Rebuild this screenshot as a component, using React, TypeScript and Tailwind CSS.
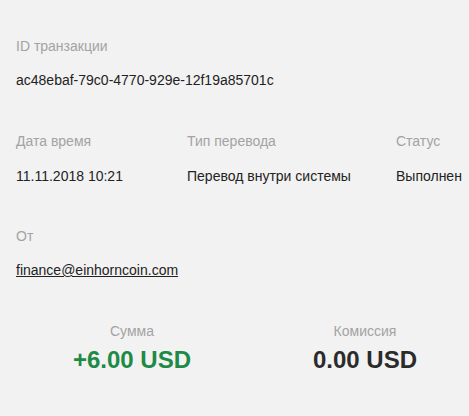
export default function App() {
  return (
    <div className="min-h-screen overflow-hidden bg-[#f2f2f2] font-['Liberation_Sans',Arial,sans-serif] text-[14px] leading-4 text-[#222]">
      <div className="px-4 pt-[38px]">
        <div className="text-[#a3a3a3]">ID транзакции</div>
        <div className="mt-[18px]">ac48ebaf-79c0-4770-929e-12f19a85701c</div>

        <div className="mt-[45px] grid grid-cols-[171px_209px_auto]">
          <div className="text-[#a3a3a3]">Дата время</div>
          <div className="text-[#a3a3a3]">Тип перевода</div>
          <div className="text-[#a3a3a3]">Статус</div>
          <div className="mt-[19px]">11.11.2018 10:21</div>
          <div className="mt-[19px]">Перевод внутри системы</div>
          <div className="mt-[19px]">Выполнен</div>
        </div>

        <div className="mt-[44px] text-[#a3a3a3]">От</div>
        <div className="mt-[18px]">
          <a href="#" className="underline">finance@einhorncoin.com</a>
        </div>
      </div>

      <div className="mt-[45px] flex pl-4">
        <div className="flex w-[232px] shrink-0 flex-col items-center">
          <div className="text-[#a3a3a3]">Сумма</div>
          <div className="mt-[7px] text-[24px] font-bold leading-7 text-[#1d8a46]">+6.00 USD</div>
        </div>
        <div className="ml-px flex w-[232px] shrink-0 flex-col items-center">
          <div className="text-[#a3a3a3]">Комиссия</div>
          <div className="mt-[7px] text-[24px] font-bold leading-7 text-[#2b2b2b]">0.00 USD</div>
        </div>
      </div>
    </div>
  );
}
